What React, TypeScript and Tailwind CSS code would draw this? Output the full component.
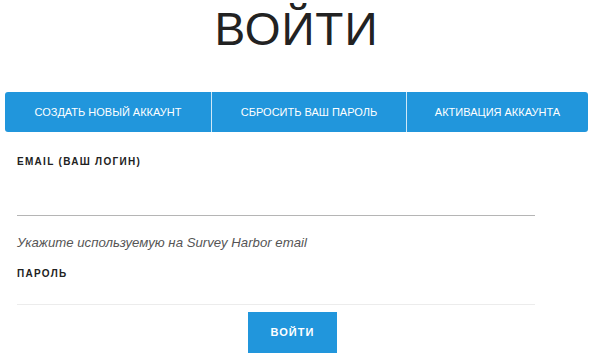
import React from "react";

export default function App() {
  const font = { fontFamily: '"Liberation Sans", Arial, sans-serif' };
  return (
    <div className="w-[600px] h-[358px] bg-white overflow-hidden" style={font}>
      <div className="pl-[5px] w-[588px]">
        <h1 className="mt-[7px] h-[45px] text-[46px] leading-[45px] font-normal text-[#222] text-center tracking-[0.02em]">
          ВОЙТИ
        </h1>
        <div className="mt-[40px] flex h-[40px] w-[583px] rounded-[3px] overflow-hidden bg-[#2196dc] text-white text-[11px]">
          <div className="w-[206px] flex items-center justify-center">СОЗДАТЬ НОВЫЙ АККАУНТ</div>
          <div className="w-[195px] flex items-center justify-center border-l border-[#cfe8f7]">СБРОСИТЬ ВАШ ПАРОЛЬ</div>
          <div className="flex-1 flex items-center justify-center border-l border-[#cfe8f7]">АКТИВАЦИЯ АККАУНТА</div>
        </div>
        <div className="pl-[12px] w-[530px]">
          <div className="mt-[24px] text-[10px] leading-[12px] font-bold tracking-[0.13em] text-[#222]">
            EMAIL (ВАШ ЛОГИН)
          </div>
          <div className="h-[48px] border-b border-[#b5b5b5]" />
          <div className="mt-[19px] text-[13.2px] leading-[16px] italic text-[#555]">
            Укажите используемую на Survey Harbor email
          </div>
          <div className="mt-[17px] text-[10px] leading-[12px] font-bold tracking-[0.13em] text-[#222]">
            ПАРОЛЬ
          </div>
          <div className="h-[25px] border-b border-[#ececec]" />
        </div>
        <div className="mt-[7px] ml-[243px] w-[89px] h-[41px] bg-[#2196dc] text-white text-[11px] font-bold tracking-[1px] flex items-center justify-center">
          ВОЙТИ
        </div>
      </div>
    </div>
  );
}
